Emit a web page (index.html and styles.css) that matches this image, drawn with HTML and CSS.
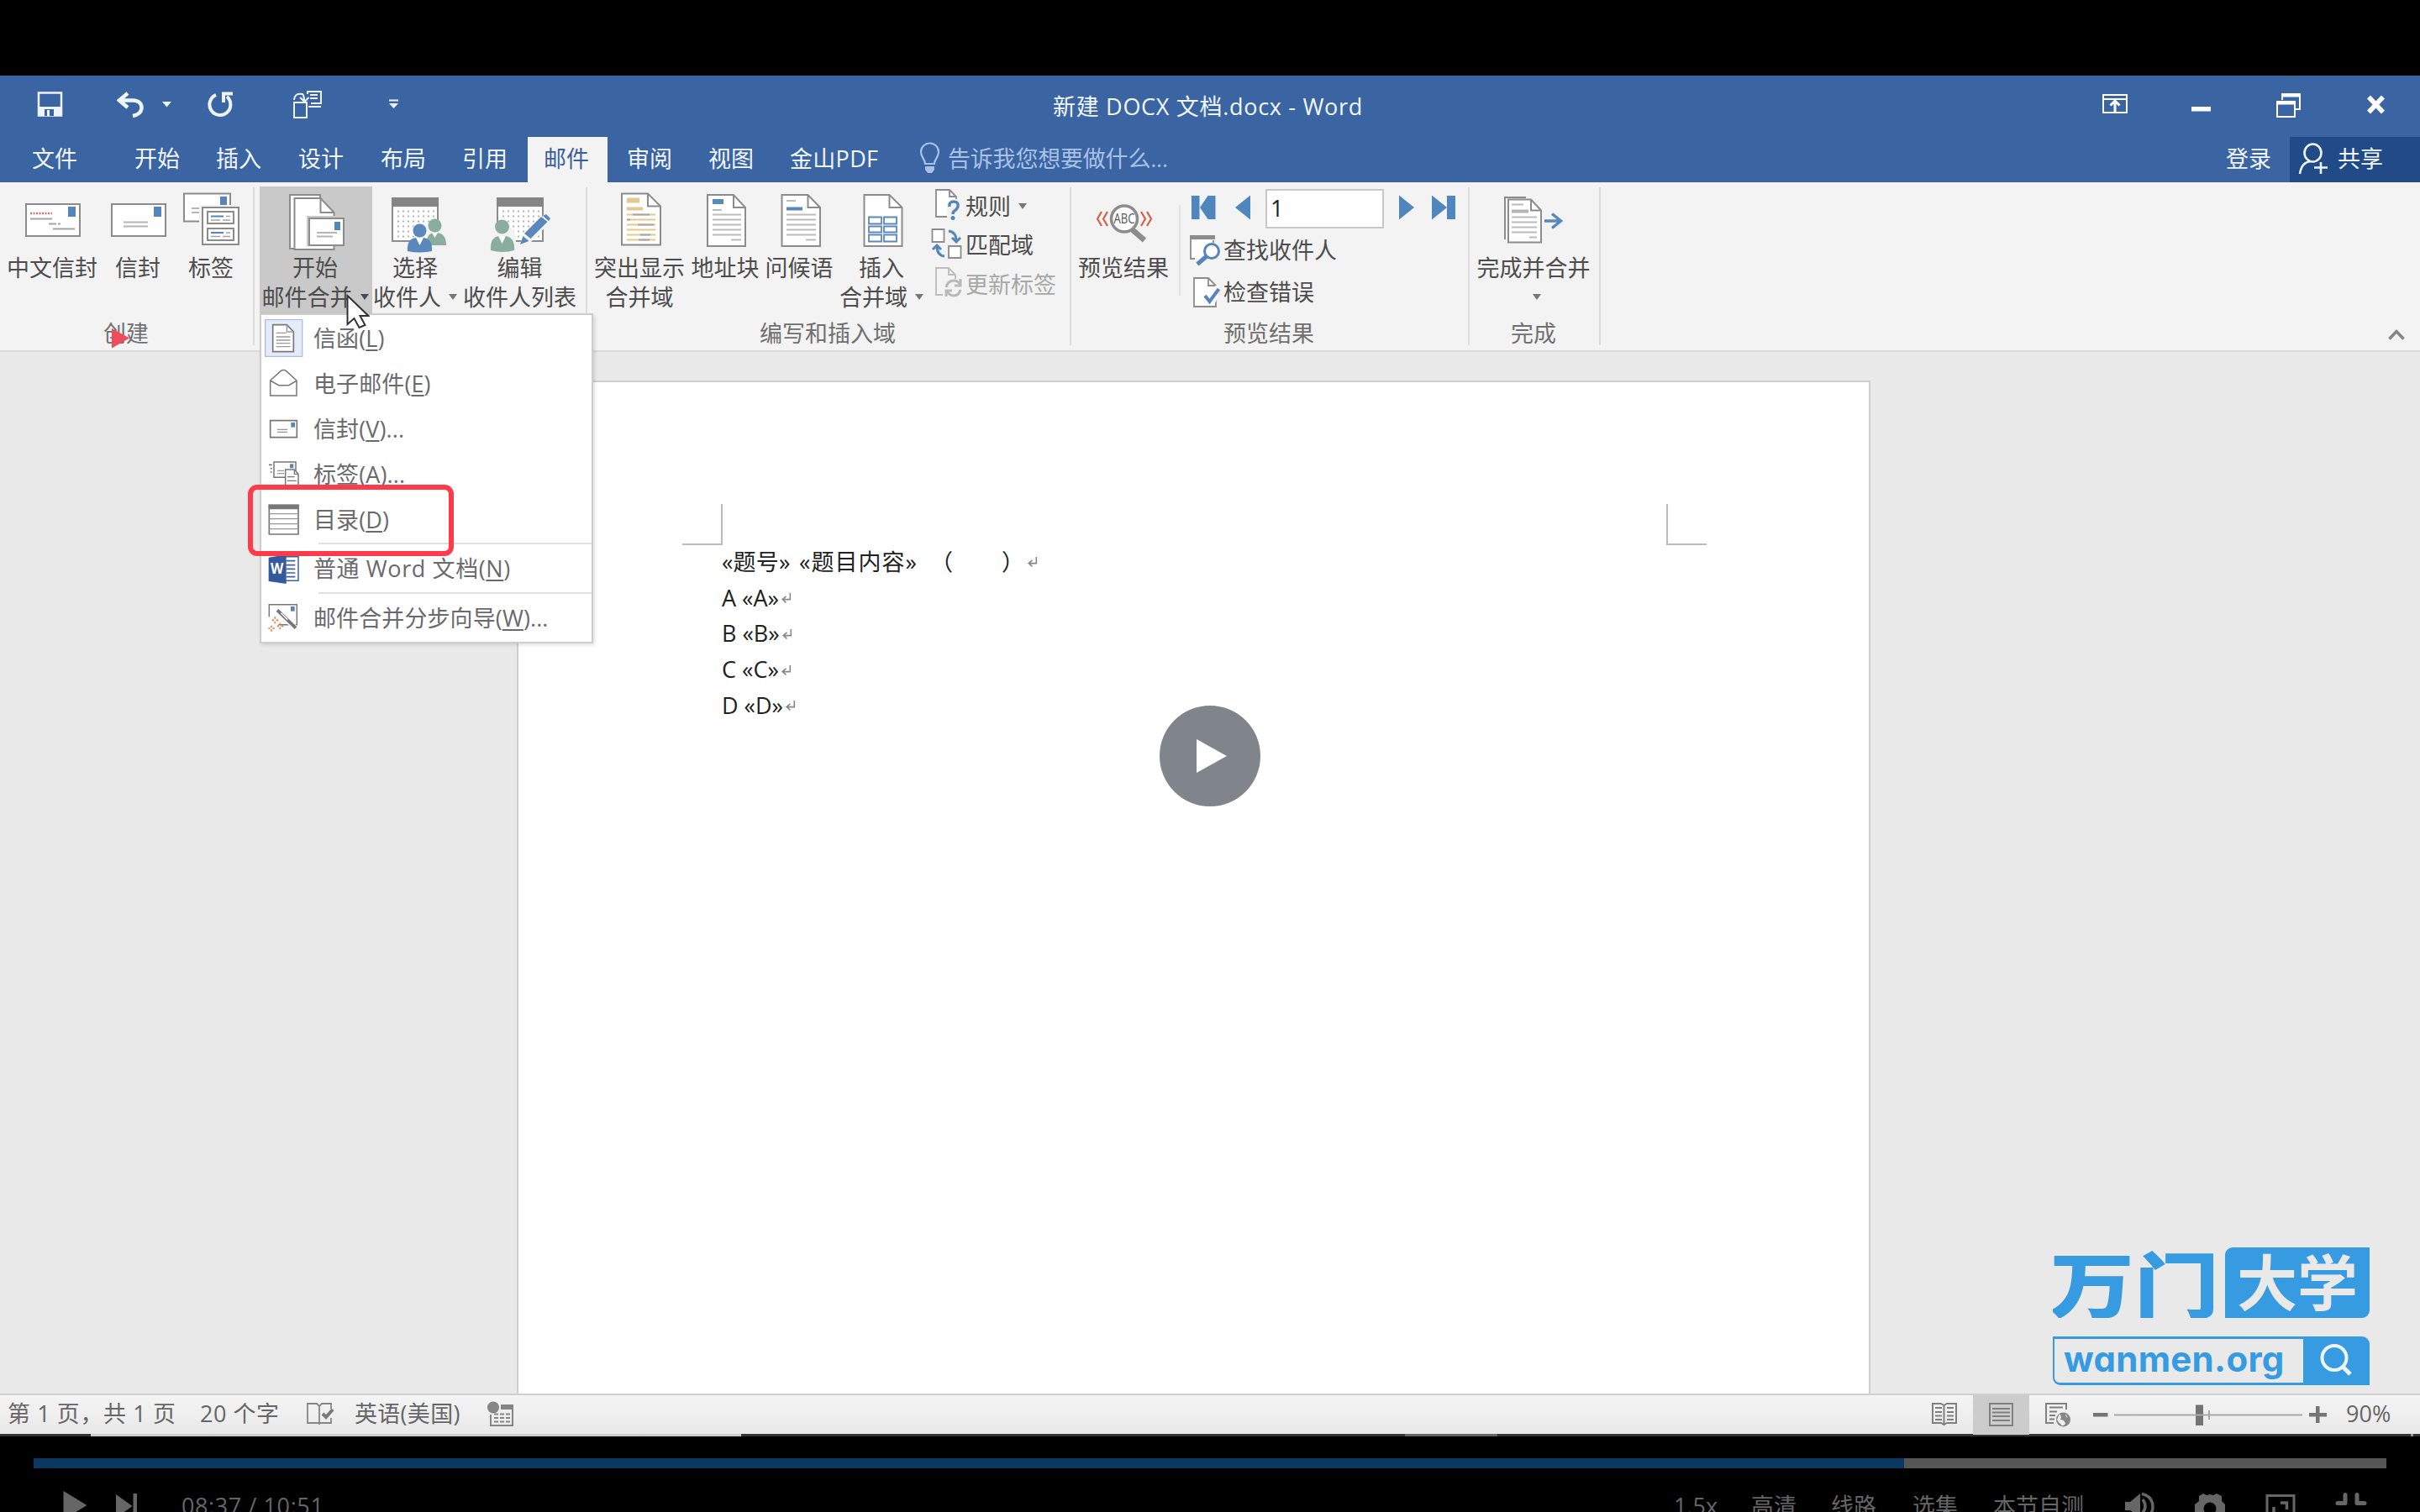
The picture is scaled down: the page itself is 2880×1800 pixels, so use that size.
FILE: index.html
```html
<!DOCTYPE html>
<html lang="zh-CN">
<head>
<meta charset="utf-8">
<title>新建 DOCX 文档.docx - Word</title>
<link rel="stylesheet" href="styles.css">
</head>
<body>
<div class="player">
  <header class="titlebar">
    <svg width="32" height="73" viewBox="44 90 32 73"><path d="M46 110.500h27v27h-27z" fill="none" stroke="#eef4ff" stroke-width="2.500"/><path d="M46 127h28v11h-28z" fill="#eef4ff"/><path d="M53 130h11v8h-11z" fill="#3a64a2"/><path d="M56 131h3v7h-3z" fill="#eef4ff"/></svg>
    <svg width="34" height="73" viewBox="139 90 34 73"><path d="M142 119.500H158Q169 120 168.500 129Q168 136 158 138" fill="none" stroke="#eef4ff" stroke-width="4.500"/><path d="M152 111l-10 8.500l10 8.500" fill="none" stroke="#eef4ff" stroke-width="4.500"/></svg>
    <svg width="12" height="73" viewBox="193 90 12 73"><path d="M193 121h11l-5.500 6.500z" fill="#eef4ff"/></svg>
    <svg width="32" height="73" viewBox="247 90 32 73"><path d="M257 113A12.500 12.500 0 1 0 270 115" fill="none" stroke="#eef4ff" stroke-width="4"/><path d="M277 111.500h-11v10.500" fill="none" stroke="#eef4ff" stroke-width="4"/></svg>
    <svg width="36" height="73" viewBox="348 90 36 73"><g fill="none" stroke="#eef4ff" stroke-width="2"><path d="M350 122h15v18h-15zM366 112v-3h16v14h-12M350 119Q351 110 360 112Q362 114 362 120M357 116l5.500 5l5-5M369 113h9M369 117h9M367 127h15"/></g></svg>
    <svg width="12" height="73" viewBox="463 90 12 73"><path d="M463 118.500h11v2h-11zM463 123h11l-5.500 6z" fill="#eef4ff"/></svg>
    <span class="doc-title">新建 DOCX 文档.docx - Word</span>
    <svg width="32" height="73" viewBox="2502 90 32 73"><path d="M2503 113h28v21h-28zM2503 118h28" fill="none" stroke="#fff" stroke-width="2"/><path d="M2517 133v-13M2511.500 125.500l5.500-5.500l5.500 5.500" fill="none" stroke="#fff" stroke-width="3"/></svg>
    <svg width="24" height="73" viewBox="2608 90 24 73"><path d="M2608 127h23v5.500h-23z" fill="#fff"/></svg>
    <svg width="32" height="73" viewBox="2709 90 32 73"><path d="M2710 121h21v18h-21zM2716 119v-7h21v18h-5" fill="none" stroke="#fff" stroke-width="2"/><path d="M2709 120h23v4.500h-23zM2715 111h23v4.500h-23z" fill="#fff"/></svg>
    <svg width="26" height="73" viewBox="2816 90 26 73"><path d="M2819 115.500l17 18M2836 115.500l-17 18" fill="none" stroke="#fff" stroke-width="5.500"/></svg>
  </header>

  <nav class="tabs">
    <span>文件</span><span>开始</span><span>插入</span><span>设计</span><span>布局</span><span>引用</span>
    <span class="active">邮件</span><span>审阅</span><span>视图</span><span class="pdf">金山PDF</span>
    <svg width="26" height="54" viewBox="1093 163 26 54"><path d="M1100 195c0-5-5-8-5-14a10.500 10.500 0 0 1 21 0c0 6-5 9-5 14z" fill="none" stroke="#a9c1e6" stroke-width="2.200"/><path d="M1100 198h11v4l-3 4h-5l-3-4z" fill="#a9c1e6"/></svg>
    <span class="tell">告诉我您想要做什么...</span>
    <span>登录</span>
    <span class="share"><svg width="36" height="54" viewBox="2735 163 36 54"><g fill="none" stroke="#eef4ff" stroke-width="2.600"><ellipse cx="2752.500" cy="182" rx="10" ry="10.500"/><path d="M2737 207q2-14 13-15M2762 193v14M2754 199.500h16"/></g></svg><span>共享</span></span>
  </nav>

  <section class="ribbon">
    <div class="group g-create">
      <div class="tools">
        <div class="tool"><svg width="126" height="79" viewBox="0 222 126 79"><path d="M31 243h64v38h-64z" fill="#fff" stroke="#8c8c8c" stroke-width="2"/><path d="M81 246h9v12h-9z" fill="#5486bd"/><path d="M36 254h26" stroke="#d9716c" stroke-width="2.500" stroke-dasharray="2 1.500"/><path d="M36 260.500h26M58 266.500h9M69 266.500h3M63 272.500h26" stroke="#a5a5a5" stroke-width="2"/></svg><span>中文信封</span></div>
        <div class="tool"><svg width="78" height="79" viewBox="126 222 78 79"><path d="M133 243h64v38h-64z" fill="#fff" stroke="#8c8c8c" stroke-width="2"/><path d="M183 246h9v12h-9z" fill="#5486bd"/><path d="M147 264.500h29M147 269.500h29" stroke="#b5b5b5" stroke-width="2"/></svg><span>信封</span></div>
        <div class="tool"><svg width="96" height="79" viewBox="204 222 96 79"><path d="M219 230.500h55v33h-55z" fill="#fff" stroke="#8c8c8c" stroke-width="2"/><path d="M262 234h8v11h-8z" fill="#5486bd"/><path d="M228 248h12M228 253h12" stroke="#b5b5b5" stroke-width="2"/><path d="M237 244h52v50h-52z" fill="#f3f3f3"/><path d="M241 247h43v44h-43zM247 252h31v14h-31zM247 272h31v14h-31z" fill="#fff" stroke="#8c8c8c" stroke-width="2"/><path d="M251 257.500h15M251 277h15" stroke="#5486bd" stroke-width="2"/><path d="M269 257.500h5M251 262h11M265 262h9M269 277h5M251 281.500h11M265 281.500h9" stroke="#a5a5a5" stroke-width="1.500"/></svg><span>标签</span></div>
      </div>
      <div class="caption">创建<svg class="marker" width="22" height="24" viewBox="0 0 22 24"><path d="M0 0l21 11.500l-21 12z" fill="#ef4b5c"/></svg></div>
    </div>

    <div class="group g-start">
      <div class="tools">
        <div class="tool pressed"><svg width="134" height="79" viewBox="309 222 134 79"><path d="M345 232h36v64h-36z" fill="#fff" stroke="#8c8c8c" stroke-width="2"/><path d="M350.500 236h31l16 17v44h-47z" fill="#fff" stroke="#8c8c8c" stroke-width="2"/><path d="M381.500 236v17h16" fill="none" stroke="#8c8c8c" stroke-width="2"/><path d="M365 257h47v36h-47z" fill="#c9c9c9"/><path d="M368 260h41v32h-41z" fill="#fff" stroke="#8c8c8c" stroke-width="2"/><path d="M398 264h7v10h-7z" fill="#5486bd"/><path d="M377 277h24M377 281.500h19" stroke="#b5b5b5" stroke-width="2"/></svg><span>开始</span><span class="drop">邮件合并<i class="dark"></i></span></div>
        <div class="tool"><svg width="104" height="79" viewBox="443 222 104 79"><path d="M467 236h54v51h-54z" fill="#fff" stroke="#8c8c8c" stroke-width="2"/><path d="M466 235h56v11h-56z" fill="#858585"/><path d="M473 251.500h45M473 257.500h45M473 263.500h45M473 269.500h45M473 275.500h45M473 281.500h45" stroke="#b5b5b5" stroke-width="2" stroke-dasharray="2 4"/><path d="M504 277q1-12 10-12h7q10 0 11 12v14h-22z" fill="#f3f3f3"/><circle cx="517.500" cy="268.500" r="8" fill="#8aad9f"/><path d="M508 292q-1-15 9-15q14-1 14 15z" fill="#8aad9f"/><path d="M514 277l3.500 6l3.500-6z" fill="#fff"/><circle cx="499.500" cy="275" r="9" fill="#f3f3f3"/><circle cx="499.500" cy="274.500" r="8" fill="#5a88bd"/><path d="M485 299q-1-15 10-16h9q11 1 10 16q-14 3-29 0z" fill="#5a88bd"/><path d="M495 283l4.500 9l4.500-9z" fill="#fff"/></svg><span>选择</span><span class="drop">收件人<i></i></span></div>
        <div class="tool"><svg width="145" height="79" viewBox="547 222 145 79"><path d="M592 236h54v51h-54z" fill="#fff" stroke="#8c8c8c" stroke-width="2"/><path d="M591 235h56v11h-56z" fill="#858585"/><path d="M598 251.500h45M598 257.500h45M598 263.500h45M598 269.500h45M598 275.500h45M598 281.500h45" stroke="#b5b5b5" stroke-width="2" stroke-dasharray="2 4"/><path d="M583 299v-15q2-12 8-13v-5h14v5q8 1 9 13v15z" fill="#f3f3f3"/><circle cx="597.500" cy="270" r="8.500" fill="#8aad9f"/><path d="M584 298q-1-15 9-17h9q11 2 10 17q-14 4-28 0z" fill="#8aad9f"/><path d="M593 281l4.500 9l4.500-9z" fill="#fff"/><path d="M618 294l4-13l26-26l9 7l-26 27z" fill="#f3f3f3"/><path d="M619 291l3.500-10l7 6zM624 278l20-20l7.500 6l-20 20zM646 257l4-2l5 5l-2 3z" fill="#5a88bd"/></svg><span>编辑</span><span>收件人列表</span></div>
      </div>
    </div>

    <div class="group g-fields">
      <div class="tools">
        <div class="tool"><svg width="116" height="79" viewBox="704 222 116 79"><path d="M740 230.500h31l15 15v46h-46z" fill="#fff" stroke="#8c8c8c" stroke-width="2"/><path d="M771 230.500v15h15" fill="none" stroke="#8c8c8c" stroke-width="2"/><path d="M746 235.500h15v6h-15zM746 246.500h19v4h-19z" fill="#e6c88f"/><path d="M746 255.500h34M746 261.500h34M746 267.500h34M746 273.500h34M746 279.500h34M746 285.500h34" stroke="#e6c88f" stroke-width="2"/><path d="M753 255.500h20M746 261.500h4M759 267.500h19M762 279.500h12M760 285.500h13" stroke="#a5a5a5" stroke-width="2"/></svg><span>突出显示</span><span>合并域</span></div>
        <div class="tool"><svg width="88" height="79" viewBox="820 222 88 79"><path d="M842 232h31l14 15v46h-45z" fill="#fff" stroke="#8c8c8c" stroke-width="2"/><path d="M873 232v15h14" fill="none" stroke="#8c8c8c" stroke-width="2"/><path d="M848 237h13v6h-13z" fill="#5a88bd"/><path d="M848 250h11M848 255.500h34M848 261.500h34M848 267.500h34M848 273.500h34M848 279.500h34M870 285.500h12" stroke="#bcbcbc" stroke-width="2"/></svg><span>地址块</span></div>
        <div class="tool"><svg width="88" height="79" viewBox="908 222 88 79"><path d="M930.500 232h31l14.500 15v46h-45.500z" fill="#fff" stroke="#8c8c8c" stroke-width="2"/><path d="M961.500 232v15h14.500" fill="none" stroke="#8c8c8c" stroke-width="2"/><path d="M936 246.500h19v4h-19z" fill="#5a88bd"/><path d="M936 239h11M936 255.500h35M936 261.500h35M936 267.500h35M936 273.500h35M936 279.500h35M959 285.500h12" stroke="#bcbcbc" stroke-width="2"/></svg><span>问候语</span></div>
        <div class="tool"><svg width="108" height="79" viewBox="996 222 108 79"><path d="M1028.500 232h30l15 15v46h-45z" fill="#fff" stroke="#8c8c8c" stroke-width="2"/><path d="M1058.500 232v15h15" fill="none" stroke="#8c8c8c" stroke-width="2"/><path d="M1034 258.500h15v8h-15zM1052 258.500h15v8h-15zM1034 269.500h15v7h-15zM1052 269.500h15v7h-15zM1034 279.500h15v8h-15zM1052 279.500h15v8h-15z" fill="#fff" stroke="#5a88bd" stroke-width="1.800"/></svg><span>插入</span><span class="drop">合并域<i></i></span></div>
        <div class="stack">
          <div class="row"><svg width="43" height="44" viewBox="1106 224 43 44"><path d="M1114 227h16l8 8v23h-24z" fill="#fff"/><path d="M1127 259h-13v-32h16l8 8v3M1130 227v8h8" fill="none" stroke="#8c8c8c" stroke-width="1.800"/><path d="M1127 242h14v20h-14z" fill="#f3f3f3"/><path d="M1130 247q-1-6 5-6q6 0 5 6q-1 3-4 5q-2 1-2 4" fill="none" stroke="#5486bd" stroke-width="3.500"/><circle cx="1134" cy="260.500" r="2.500" fill="#5486bd"/></svg><span>规则</span><i></i></div>
          <div class="row"><svg width="43" height="44" viewBox="1106 271 43 44"><path d="M1109.500 274h14v15h-14zM1129 294h14.500v14h-14.500z" fill="#fff" stroke="#8c8c8c" stroke-width="1.800"/><path d="M1129 276q9 1 9 12M1133 284l5 5l5-5M1124 306q-9-1-9-12M1110 298l5-5l5 5" fill="none" stroke="#5486bd" stroke-width="3"/></svg><span>匹配域</span></div>
          <div class="row off"><svg width="43" height="44" viewBox="1106 317 43 44"><path d="M1122 352h-8v-32h15l8 8v5M1129 320v8h8" fill="none" stroke="#bcbcbc" stroke-width="1.800"/><path d="M1126 343q2-8 9-8q5 0 8 5M1143 333v8h-7M1143 346q-2 7-8 7q-5 0-8-5M1126 354v-7h7" fill="none" stroke="#b9b9b9" stroke-width="3"/></svg><span>更新标签</span></div>
        </div>
      </div>
      <div class="caption">编写和插入域</div>
    </div>

    <div class="group g-preview">
      <div class="tools">
        <div class="tool"><svg width="116" height="79" viewBox="1280 222 116 79"><path d="M1311 252l-5 8.500l5 8.500M1318 252l-5 8.500l5 8.500M1358 252l5 8.500l-5 8.500M1365 252l5 8.500l-5 8.500" fill="none" stroke="#d5604c" stroke-width="2.200"/><path d="M1347 273l15 13" stroke="#8c8c8c" stroke-width="6.500"/><circle cx="1338" cy="260.500" r="15.500" fill="#fff" stroke="#8c8c8c" stroke-width="3.500"/><text x="1338" y="266" text-anchor="middle" textLength="25" lengthAdjust="spacingAndGlyphs" class="abc">ABC</text></svg><span>预览结果</span></div>
        <div class="records">
          <div class="pager">
            <svg width="32" height="52" viewBox="1416 222 32 52"><path d="M1418 233h9.500v28h-9.500zM1428 247l9.500-14h9v28h-9z" fill="#4f86be"/></svg>
            <svg width="20" height="52" viewBox="1469 222 20 52"><path d="M1470 247l18-14.500v29z" fill="#4f86be"/></svg>
            <span class="num">1</span>
            <svg width="20" height="52" viewBox="1664 222 20 52"><path d="M1683 247l-18-14.500v29z" fill="#4f86be"/></svg>
            <svg width="32" height="52" viewBox="1703 222 32 52"><path d="M1704 232.500l18 14.500l-18 14.500zM1722 233h10v28h-10z" fill="#4f86be"/></svg>
          </div>
          <div class="row"><svg width="43" height="46" viewBox="1414 275 43 46"><path d="M1417 280h28v27h-28z" fill="#fff"/><path d="M1422 307h-5v-27M1444 285v3" fill="none" stroke="#8c8c8c" stroke-width="1.800"/><path d="M1416 279h30v5h-30z" fill="#8c8c8c"/><circle cx="1442" cy="298" r="8.500" fill="#fff" stroke="#5486bd" stroke-width="3"/><path d="M1436 304l-11 9.500" stroke="#5486bd" stroke-width="5"/></svg><span>查找收件人</span></div>
          <div class="row"><svg width="43" height="46" viewBox="1414 325 43 46"><path d="M1421 330h17l9 9v25h-26z" fill="#fff" stroke="#8c8c8c" stroke-width="1.800"/><path d="M1438 330v9h9" fill="none" stroke="#8c8c8c" stroke-width="1.800"/><path d="M1431 350l16-11h5l-5 20h-8z" fill="#fff"/><path d="M1434 351l5.500 7l11-15" fill="none" stroke="#5486bd" stroke-width="4"/></svg><span>检查错误</span></div>
        </div>
      </div>
      <div class="caption">预览结果</div>
    </div>

    <div class="group g-finish">
      <div class="tools">
        <div class="tool"><svg width="154" height="79" viewBox="1749 222 154 79"><path d="M1791 285v-50h25" fill="none" stroke="#8c8c8c" stroke-width="2"/><path d="M1795 237.500h27l12 13v38h-39z" fill="#fff" stroke="#8c8c8c" stroke-width="2"/><path d="M1822 237.500v13h12" fill="none" stroke="#8c8c8c" stroke-width="2"/><path d="M1799 249.500h20v4h-20z" fill="#b5b5b5"/><path d="M1799 243.500h14M1799 258.500h30M1799 264.500h30M1799 270.500h30M1799 276.500h30M1820 282.500h9" stroke="#bcbcbc" stroke-width="2"/><path d="M1838 263h20M1847 254.500l10.500 8.500l-10.500 8.500" fill="none" stroke="#5a88bd" stroke-width="3.500"/></svg><span>完成并合并</span><span class="drop"><i></i></span></div>
      </div>
      <div class="caption">完成</div>
    </div>
    <svg class="collapse" width="22" height="16" viewBox="0 0 22 16"><path d="M2.500 13.500l8.500-9l8.500 9" fill="none" stroke="#868686" stroke-width="3.600"/></svg>
  </section>

  <main class="canvas">
    <article class="page">
      <div class="corners"><b class="corner-l"></b><b class="corner-r"></b></div>
      <p class="first"><span class="f1">«题号»</span><span class="f2">«题目内容»</span><span>（</span><span>）</span><svg class="ret" viewBox="0 0 11 14"><path d="M10 1v7h-8M5.500 4.500l-4 3.500l4 3.500"/></svg></p>
      <p>A «A»<svg class="ret" viewBox="0 0 11 14"><path d="M10 1v7h-8M5.500 4.500l-4 3.500l4 3.500"/></svg></p>
      <p>B «B»<svg class="ret" viewBox="0 0 11 14"><path d="M10 1v7h-8M5.500 4.500l-4 3.500l4 3.500"/></svg></p>
      <p>C «C»<svg class="ret" viewBox="0 0 11 14"><path d="M10 1v7h-8M5.500 4.500l-4 3.500l4 3.500"/></svg></p>
      <p>D «D»<svg class="ret" viewBox="0 0 11 14"><path d="M10 1v7h-8M5.500 4.500l-4 3.500l4 3.500"/></svg></p>
    </article>
  </main>

  <footer class="status">
    <span class="s-page">第 1 页，共 1 页</span>
    <span class="s-words">20 个字</span>
    <svg width="34" height="47" viewBox="363 1660 34 47"><path d="M379 1693h-14v-23h11l3 3l3-3h11v6M379 1673v22M379 1693h14v-6" fill="none" stroke="#858585" stroke-width="1.800"/><path d="M383 1682l4 4l8-9" fill="none" stroke="#7a7a7a" stroke-width="4"/></svg>
    <span class="s-lang">英语(美国)</span>
    <svg width="34" height="47" viewBox="579 1660 34 47"><circle cx="587" cy="1674.500" r="7" fill="#858585"/><path d="M596 1671h15v6h-15z" fill="#858585"/><path d="M584 1683v13h26v-22" fill="none" stroke="#858585" stroke-width="2"/><path d="M588 1682.500h19M588 1687h19M588 1691.500h19" stroke="#858585" stroke-width="1.800" stroke-dasharray="5 2"/></svg>
    <svg width="34" height="47" viewBox="2297 1660 34 47"><path d="M2300 1670h10l3.500 2l3.500-2h11v23h-11l-3.500 2l-3.500-2h-10zM2313.500 1672v22" fill="none" stroke="#808080" stroke-width="2"/><path d="M2303 1675h8M2303 1680h8M2303 1684.500h8M2303 1689h8M2317 1675h8M2317 1680h8M2317 1684.500h8M2317 1689h8" stroke="#808080" stroke-width="1.800"/></svg>
    <div class="view"><svg width="67" height="47" viewBox="2348 1660 67 47"><path d="M2368 1670h27v26h-27z" fill="none" stroke="#808080" stroke-width="2"/><path d="M2371 1676h21M2371 1680.500h21M2371 1685h21M2371 1690h21" stroke="#808080" stroke-width="1.800"/></svg></div>
    <svg width="34" height="47" viewBox="2433 1660 34 47"><path d="M2444 1693h-9v-23h24v7" fill="none" stroke="#808080" stroke-width="2"/><path d="M2439 1674.500h16M2439 1679.500h9M2439 1684h7M2439 1688.500h6" stroke="#808080" stroke-width="1.800"/><circle cx="2455.500" cy="1689" r="8.500" fill="#858585"/><path d="M2451 1682q3 4 1 7q5 0 6 5q-4 4-5 1q-4-3-5-6zM2458 1682q0 4 3 5z" fill="#eee"/></svg>
    <svg width="280" height="47" viewBox="2490 1660 280 47"><path d="M2491 1681h17.500v4.500h-17.500zM2748 1681h21v4.500h-21zM2756 1673h4.500v20h-4.500zM2613 1671.500h9v24.500h-9z" fill="#747474"/><path d="M2516 1683.500h224M2629 1678v11" stroke="#a8a8a8" stroke-width="2"/></svg>
    <span class="s-zoom">90%</span>
  </footer>
  <div class="edge"></div>

  <div class="progress"><div class="played"></div></div>
  <div class="controls">
    <svg width="30" height="40" viewBox="73 1760 30 40"><path d="M75.500 1775l28 17l-28 17z" fill="#666"/></svg>
    <svg width="26" height="40" viewBox="138 1760 26 40"><path d="M138 1779l19.500 14l-19.500 14zM158.500 1778h4.500v30h-4.500z" fill="#666"/></svg>
    <span class="c-time">08:37 / 10:51</span>
    <span>1.5x</span><span>高清</span><span>线路</span><span>选集</span><span>本节自测</span>
    <svg width="38" height="40" viewBox="2527 1760 38 40"><path d="M2529 1788h6l12-10v28l-12-8h-6z" fill="#666"/><path d="M2550 1785q6 8 0 16M2549 1778.500q13 3 13 15.500q0 5-3 9" fill="none" stroke="#666" stroke-width="3.500"/></svg>
    <svg width="38" height="40" viewBox="2611 1760 38 40"><path d="M2612 1791l5-4v-6l5-3l4 2l4-1l4 1l4-2l6 3v6l4 4v15h-36z" fill="#666"/><circle cx="2630" cy="1796" r="7.500" fill="#000"/></svg>
    <svg width="36" height="40" viewBox="2696 1760 36 40"><path d="M2698 1806v-25.500h32v26" fill="none" stroke="#666" stroke-width="3"/><path d="M2714 1789h7.500v8M2706 1794v8" fill="none" stroke="#666" stroke-width="3.500"/></svg>
    <svg width="40" height="40" viewBox="2779 1760 40 40"><path d="M2791 1779.500v10h-9M2805 1779.500v10h9" fill="none" stroke="#666" stroke-width="5" stroke-linecap="round" stroke-linejoin="round"/></svg>
  </div>

  <div class="menu">
    <div class="item"><svg width="62" height="54" viewBox="60 54 186 162"><path d="M77 65h132v131h-132z" fill="#e4ecfb" stroke="#a9bfe6" stroke-width="4"/><path d="M104 83h50l24 25v71h-74z" fill="#fff" stroke="#777" stroke-width="5"/><path d="M154 83v25h24M116 112h36M116 126h50M116 138h50M116 149h50M116 161h50" fill="none" stroke="#999" stroke-width="4"/></svg><span>信函(<u>L</u>)</span></div>
    <div class="item"><svg width="62" height="54" viewBox="60 216 186 162"><path d="M95 336v-54l38-35q9-5 18 0l38 35v54zM95 282l30 17h36l29-17" fill="#fff" stroke="#777" stroke-width="4.500"/></svg><span>电子邮件(<u>E</u>)</span></div>
    <div class="item"><svg width="62" height="54" viewBox="60 378 186 162"><path d="M95 425h95v60h-95z" fill="#fff" stroke="#777" stroke-width="5"/><path d="M169 432h14v17h-14z" fill="#5b83b5"/><path d="M120 457h36M120 466h36" stroke="#999" stroke-width="4"/></svg><span>信封(<u>V</u>)...</span></div>
    <div class="item"><svg width="62" height="54" viewBox="60 540 186 162"><path d="M108 573h78v55h-78z" fill="#fff" stroke="#777" stroke-width="4.500"/><path d="M165 580h13v15h-13z" fill="#5b83b5"/><path d="M90 583h11M95 596h6M95 609h6" stroke="#777" stroke-width="5"/><path d="M120 604h24M120 614h24" stroke="#999" stroke-width="4"/><path d="M149 660v-60h32l14 16v44" fill="#fff" stroke="#777" stroke-width="4.500"/><path d="M181 600v16h14M156 626h26M156 640h32" fill="none" stroke="#777" stroke-width="4"/></svg><span>标签(<u>A</u>)...</span></div>
    <div class="item"><svg width="62" height="54" viewBox="60 702 186 162"><path d="M91 727h104v104h-104z" fill="#fff" stroke="#777" stroke-width="5"/><path d="M89 725h108v17h-108z" fill="#777"/><path d="M91 758h104M91 776h104M91 794h104M91 812h104" stroke="#999" stroke-width="4"/></svg><span>目录(<u>D</u>)</span></div>
    <hr>
    <div class="item"><svg width="62" height="54" viewBox="60 876 186 162"><path d="M148 911h47v86h-47z" fill="#fff" stroke="#3d64a0" stroke-width="4.500"/><path d="M152 926h32M152 941h32M152 955h32M152 969h32M152 983h32" stroke="#3d64a0" stroke-width="5"/><path d="M89 914l63-10v104l-63-9z" fill="#34599c"/><text x="119" y="971" text-anchor="middle" textLength="46" lengthAdjust="spacingAndGlyphs" class="w">W</text></svg><span class="plain">普通 Word 文档(<u>N</u>)</span></div>
    <hr>
    <div class="item"><svg width="62" height="54" viewBox="60 1053 186 162"><path d="M91 1082h99v72h-99z" fill="#fff" stroke="#777" stroke-width="4.500"/><path d="M168 1089h14v17h-14z" fill="#5b83b5"/><path d="M86 1126h38v34h-38z" fill="#fff"/><path d="M122 1104l60 60" stroke="#fff" stroke-width="20"/><path d="M120 1102l66 64" stroke="#777" stroke-width="12"/><path d="M133 1112l24 24" stroke="#fff" stroke-width="4"/><path d="M112 1126v7M112 1143v7M101 1138h7M116 1138h8M130 1148v7M130 1163v7M119 1159h7M134 1159h8M99 1157v7M99 1171v7M88 1167h7M103 1167h8" stroke="#df7c3c" stroke-width="5"/></svg><span>邮件合并分步向导(<u>W</u>)...</span></div>
  </div>
  <div class="frame"></div>
  <svg class="pointer" viewBox="0 0 28 42"><path d="M1.500 2v34l8-7l6 11l7-3l-6-11h10z" fill="#fff" stroke="#333" stroke-width="2"/></svg>

  <div class="bigplay"><svg width="120" height="120" viewBox="0 0 120 120"><path d="M44 40l36 20l-36 20z" fill="#fff"/></svg></div>

  <div class="brand">
    <div class="brand-top">
      <svg width="198" height="84" viewBox="0 0 198 84"><text x="-4" y="77" textLength="202" lengthAdjust="spacingAndGlyphs" class="wm">万门</text></svg>
      <span class="college">大学</span>
    </div>
    <div class="brand-url"><span>wanmen.org</span><svg width="78" height="58" viewBox="0 0 78 58"><circle cx="36" cy="25.500" r="14.500" fill="none" stroke="#eef5fb" stroke-width="4"/><path d="M46 36l9 9" stroke="#eef5fb" stroke-width="5"/></svg></div>
  </div>
</div>
</body>
</html>
```

FILE: styles.css
```css
* { box-sizing: border-box; }
html, body { margin: 0; background: #000; }
body, .player { width: 2880px; height: 1800px; overflow: hidden; }
.player {
  position: relative;
  padding-top: 90px;
  font: 27px/35px "Open Sans", "Noto Sans CJK SC", sans-serif;
  color: #4d4d4d;
  white-space: nowrap;
}
svg { display: block; flex: none; }
p { margin: 0; }

.titlebar {
  display: grid;
  grid-template-columns: 95px 54px 54px 101px 115px 790px 1249px 106px 101px 107px 64px;
  align-items: center;
  height: 73px;
  padding-left: 44px;
  background: #3a64a2;
  color: #f2f6ff;
}
.doc-title { letter-spacing: .7px; }

.tabs {
  display: grid;
  grid-template-columns: 122px 97px 98px 98px 97px 78px 118px 97px 97px 154px 34px 1521px 76px 155px;
  align-items: center;
  height: 54px;
  line-height: 32px;
  padding-left: 38px;
  background: #3a64a2;
  color: #f2f6ff;
}
.tabs > span:not(.share) { padding-bottom: 3px; }
.pdf { letter-spacing: .3px; }
.tabs .active {
  width: 95px;
  height: 54px;
  line-height: 52px;
  padding-left: 19px;
  background: #f3f3f3;
  color: #3a5f9d;
}
.tabs .tell { color: #a9c1e6; letter-spacing: -.2px; }
.share {
  display: flex;
  align-items: center;
  gap: 11px;
  height: 54px;
  padding-left: 10px;
  background: #204b86;
}
.share span { padding-bottom: 3px; }

.ribbon {
  display: flex;
  position: relative;
  height: 202px;
  background: #f3f3f3;
  border-bottom: 2px solid #d9d9d9;
}
.group { position: relative; height: 200px; padding-top: 5px; }
.group::after {
  content: "";
  position: absolute;
  right: -1px;
  top: 6px;
  width: 2px;
  height: 188px;
  background: #dcdcdc;
}
.g-create { width: 302px; }
.g-start { width: 396px; padding-left: 7px; }
.g-fields { width: 576px; }
.g-preview { width: 474px; }
.g-finish { width: 156px; }
.tools { display: flex; height: 152px; }
.g-fields .tools, .g-preview .tools { padding-left: 6px; }
.g-finish .tools { padding-left: 1px; }
.tool { display: flex; flex-direction: column; align-items: center; }
.tool > span { margin-right: 2px; }
.pressed { background: #c9c9c9; }
.drop { display: flex; align-items: center; gap: 9px; height: 35px; }
.tools i {
  border: 5.5px solid transparent;
  border-top: 7px solid #777;
  border-bottom: 0;
}
.tools i.dark { border-top-color: #4a4a4a; }
.g-finish i { margin-left: 7px; }
.caption {
  position: relative;
  height: 40px;
  line-height: 40px;
  margin-top: 3px;
  padding-right: 2px;
  text-align: center;
  color: #707070;
}
.marker { position: absolute; left: 133px; top: 14px; }
.stack { padding-left: 2px; }
.stack .row { height: 46.600px; }
.row { display: flex; align-items: center; }
.row i { margin-left: 9px; }
.off { color: #a8a8a8; }
.g-preview .tool { width: 116px; }
.records {
  margin-left: 7px;
  padding-left: 9px;
  border-left: 2px solid transparent;
  border-image: linear-gradient(transparent 15%, #e2e2e2 15%, #e2e2e2 85%, transparent 85%) 1;
}
.records .row { height: 50px; }
.records .row span { margin: 0 0 3px -1px; }
.pager {
  display: grid;
  grid-template-columns: 53px 37px 158px 39px 32px;
  align-items: center;
  height: 52px;
  padding-left: 2px;
}
.num {
  width: 141px;
  height: 47px;
  padding-left: 4px;
  line-height: 42px;
  background: #fff;
  border: 2px solid #c8c8c8;
  color: #222;
}
.abc { font: 16px "Open Sans", sans-serif; fill: #555; }
.collapse { position: absolute; left: 2841px; top: 173px; }

.canvas {
  display: flex;
  height: 1240px;
  padding: 34px 0 0 615px;
  background: #e9e9e9;
}
.page {
  width: 1611px;
  padding-left: 242px;
  background: #fff;
  border: 2px solid #cfcfcf;
  border-bottom: 0;
  font-size: 27px;
  color: #222;
}
.page p { display: flex; align-items: center; height: 42.750px; }
.page .first {
  display: grid;
  grid-template-columns: 92px 156px 85px 28px 20px;
  margin-top: -2px;
}
.f1 { letter-spacing: .2px; }
.f2 { letter-spacing: 1px; }
.ret { width: 13px; height: 15px; margin: 3px 0 0 2px; fill: none; stroke: #888; stroke-width: 1.500; }
.corners {
  display: flex;
  justify-content: space-between;
  height: 49px;
  width: 1219px;
  margin: 145px 0 0 -47px;
}
.corners b { width: 48px; border-bottom: 2px solid #bbb; }
.corner-l { border-right: 2px solid #bbb; }
.corner-r { border-left: 2px solid #bbb; }

.status {
  display: grid;
  grid-template-columns: 229px 125px 59px 156px 1718px 51px 85px 57px 303px 87px;
  align-items: center;
  height: 48px;
  padding-left: 10px;
  background: linear-gradient(#f4f4f4, #e9e9e9);
  border-top: 2px solid #cfcfcf;
  color: #666;
}
.status > span { padding-bottom: 4px; margin-left: -1px; }
.view { background: #ccc; width: 67px; }
.s-page { letter-spacing: .6px; }
.s-words { letter-spacing: .5px; }
.s-lang { letter-spacing: .3px; }
.edge {
  height: 3px;
  background: linear-gradient(90deg, #333 108px, #ccc 108px, #ccc 882px, #333 882px, #333 1672px, #666 1672px, #666 1782px, #333 1782px, #333 2869px, #999 2869px, #999 2872px, #333 2872px);
}

.progress { height: 12px; margin: 26px 40px 0; background: #565656; }
.played { width: 2226px; height: 12px; background: #0a3860; }
.controls {
  display: grid;
  grid-template-columns: 65px 79px 1776px 92px 95px 97px 96px 154px 84px 85px 83px 40px;
  height: 40px;
  margin-top: 12px;
  padding-left: 73px;
  color: #666;
  overflow: hidden;
}
.controls span { padding-top: 15px; height: 40px; margin-left: -1px; }
.controls .c-time { letter-spacing: .6px; }

.menu {
  position: absolute;
  left: 309px;
  top: 373px;
  width: 397px;
  height: 393px;
  padding-top: 2px;
  background: #fff;
  border: 2px solid #cdcdcd;
  box-shadow: 2px 2px 4px rgba(0, 0, 0, .12);
  color: #6a6a6e;
}
.item { display: flex; align-items: center; height: 54px; margin-left: -1px; }
.item span { margin: 0 0 3px 1px; letter-spacing: .1px; }
.item .plain { letter-spacing: .6px; }
.item u { text-decoration-thickness: 2px; text-underline-offset: 3px; }
.menu hr { margin: -1px 0 3px 68px; height: 2px; border: 0; background: #e0e0e0; }
.menu hr + .item { margin-bottom: 1px; }
.w { font: bold 54px "Open Sans", sans-serif; fill: #fff; }
.frame {
  position: absolute;
  left: 295px;
  top: 577px;
  width: 245px;
  height: 85px;
  border: 6px solid #ff3b4b;
  border-radius: 11px;
}
.pointer { position: absolute; left: 412px; top: 350px; width: 28px; height: 42px; }

.bigplay {
  position: absolute;
  left: 1380px;
  top: 840px;
  width: 120px;
  height: 120px;
  border-radius: 50%;
  background: #80858c;
}

.brand { position: absolute; left: 2443px; top: 1485px; width: 377px; color: #369be0; }
.brand-top { display: flex; justify-content: space-between; height: 84px; }
.wm { font: 900 84px "Noto Sans CJK SC", sans-serif; fill: #369be0; }
.college {
  width: 172px;
  padding-left: 14px;
  font: bold 72px/82px "Open Sans", "Noto Sans CJK SC", sans-serif;
  background: #369be0;
  border-radius: 9px 0 9px 0;
  color: #e9e9e9;
}
.brand-url {
  display: flex;
  justify-content: space-between;
  height: 58px;
  margin-top: 22px;
  background: #369be0;
  border-radius: 0 9px 0 9px;
}
.brand-url span {
  width: 296px;
  margin: 3px 0 3px 2px;
  padding-left: 11px;
  background: #e9e9e9;
  border-radius: 0 0 0 6px;
  font: 700 42px/48px Inter, sans-serif;
  font-feature-settings: "cv11";
  letter-spacing: .3px;
}
```
